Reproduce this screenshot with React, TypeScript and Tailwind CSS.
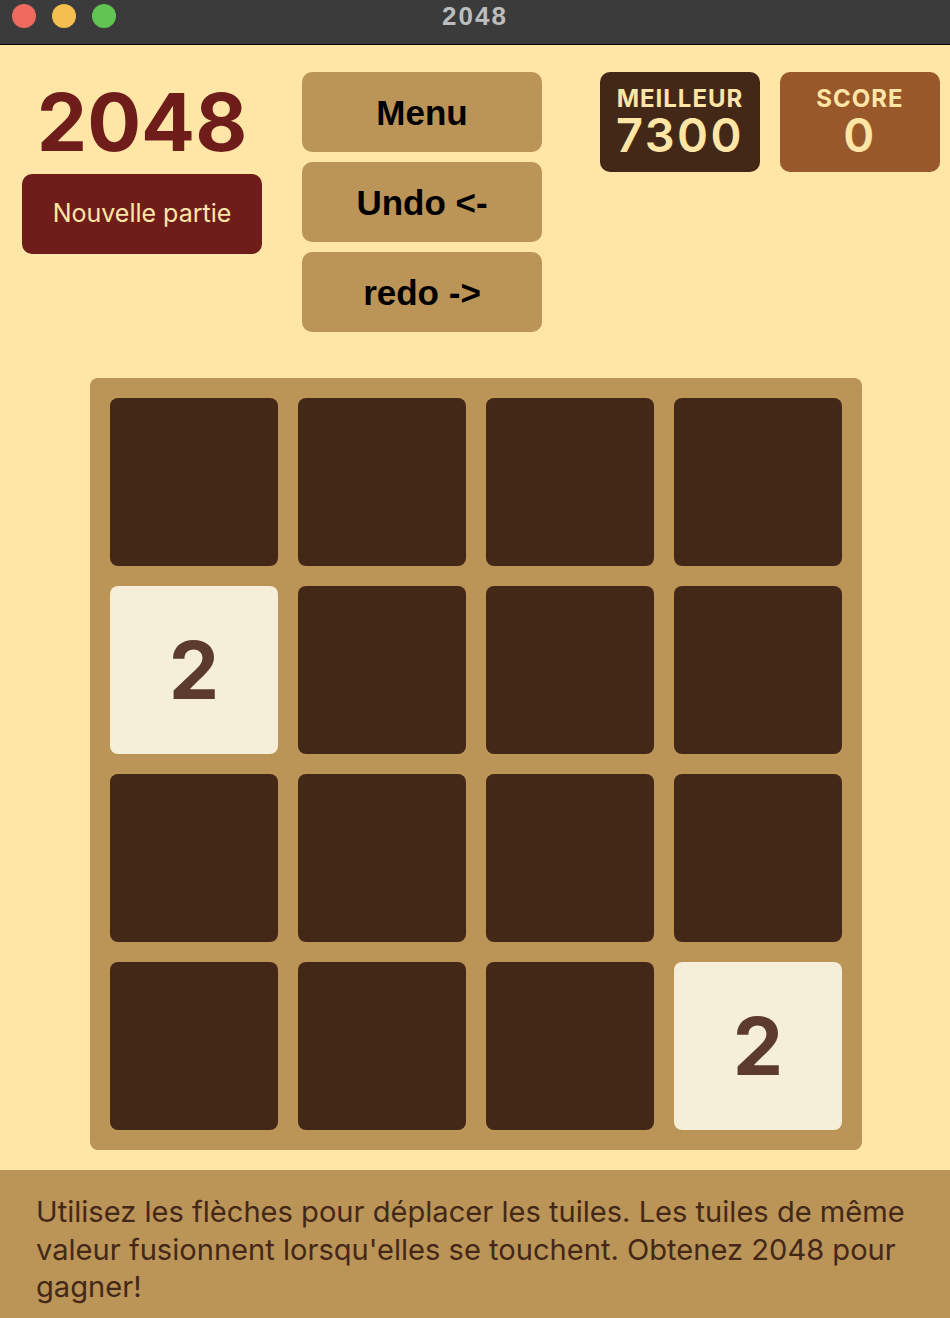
import React, { useState } from 'react';

type Cell = number | null;

const initialBoard: Cell[] = [
    null, null, null, null,
    2, null, null, null,
    null, null, null, null,
    null, null, null, 2,
];

const TitleBar: React.FC = () => (
    <div className="h-[45px] bg-[#3b3b3b] border-b border-black flex flex-col">
        <div className="relative h-[32px] flex items-center">
            <div className="flex items-center gap-4 pl-3">
                <span className="h-6 w-6 rounded-full bg-[#ee6a5f]" />
                <span className="h-6 w-6 rounded-full bg-[#f5bf4f]" />
                <span className="h-6 w-6 rounded-full bg-[#61c554]" />
            </div>
            <div className="absolute inset-0 flex items-center justify-center font-['Liberation_Sans',Arial,sans-serif] font-bold text-[26px] tracking-[2px] text-[#bdbdbd]">
                2048
            </div>
        </div>
    </div>
);

const ActionButton: React.FC<{ label: string; onClick?: () => void }> = ({ label, onClick }) => (
    <button
        onClick={onClick}
        className="h-20 w-[240px] rounded-[10px] bg-[#bb9457] text-black font-['Liberation_Sans',Arial,sans-serif] font-bold text-[35px] leading-none flex items-center justify-center"
    >
        {label}
    </button>
);

const ScoreBox: React.FC<{ label: string; value: number; className: string }> = ({ label, value, className }) => (
    <div className={`h-[100px] w-[160px] rounded-[10px] flex flex-col items-center justify-center text-[#ffe6a7] ${className}`}>
        <span className="text-[24px] font-bold leading-none tracking-[1px]">{label}</span>
        <span className="text-[47px] font-semibold leading-none tracking-[2.5px]">{value}</span>
    </div>
);

const Tile: React.FC<{ value: Cell }> = ({ value }) =>
    value ? (
        <div className="h-[168px] w-[168px] rounded-lg bg-[#f5eed8] flex items-center justify-center text-[80px] font-bold leading-none text-[#5c3b2e]">
            {value}
        </div>
    ) : (
        <div className="h-[168px] w-[168px] rounded-lg bg-[#432818]" />
    );

export default function App() {
    const [board, setBoard] = useState<Cell[]>(initialBoard);
    const [score, setScore] = useState(0);

    const reset = () => {
        setBoard(initialBoard);
        setScore(0);
    };

    return (
        <div className="h-[1318px] overflow-hidden flex flex-col bg-[#ffe6a7] font-['Inter','Noto_Sans',sans-serif]">
            <TitleBar />

            <header className="flex items-start pt-[27px] pl-[22px]">
                <div className="w-[240px] flex flex-col items-center pt-[10px]">
                    <h1 className="text-[80px] font-bold leading-none text-[#6f1d1b]">2048</h1>
                    <button
                        onClick={reset}
                        className="mt-3 h-20 w-[240px] rounded-[10px] bg-[#6f1d1b] text-[#ffe6a7] text-[25px]"
                    >
                        Nouvelle partie
                    </button>
                </div>

                <div className="ml-10 flex flex-col gap-[10px]">
                    <ActionButton label="Menu" />
                    <ActionButton label="Undo <-" />
                    <ActionButton label="redo ->" />
                </div>

                <div className="ml-[58px] flex gap-5">
                    <ScoreBox label="MEILLEUR" value={7300} className="bg-[#432818]" />
                    <ScoreBox label="SCORE" value={score} className="bg-[#99582a]" />
                </div>
            </header>

            <main className="flex justify-center mt-[46px] pl-[2px]">
                <div className="grid grid-cols-4 gap-5 p-5 rounded-lg bg-[#bb9457]">
                    {board.map((v, i) => (
                        <Tile key={i} value={v} />
                    ))}
                </div>
            </main>

            <footer className="mt-5 flex-1 bg-[#bb9457] pl-9 pr-5 pt-[23px] text-[29.1px] leading-[37.5px] text-[#432818]">
                Utilisez les flèches pour déplacer les tuiles. Les tuiles de même valeur fusionnent lorsqu'elles se touchent. Obtenez 2048 pour gagner!
            </footer>
        </div>
    );
}
